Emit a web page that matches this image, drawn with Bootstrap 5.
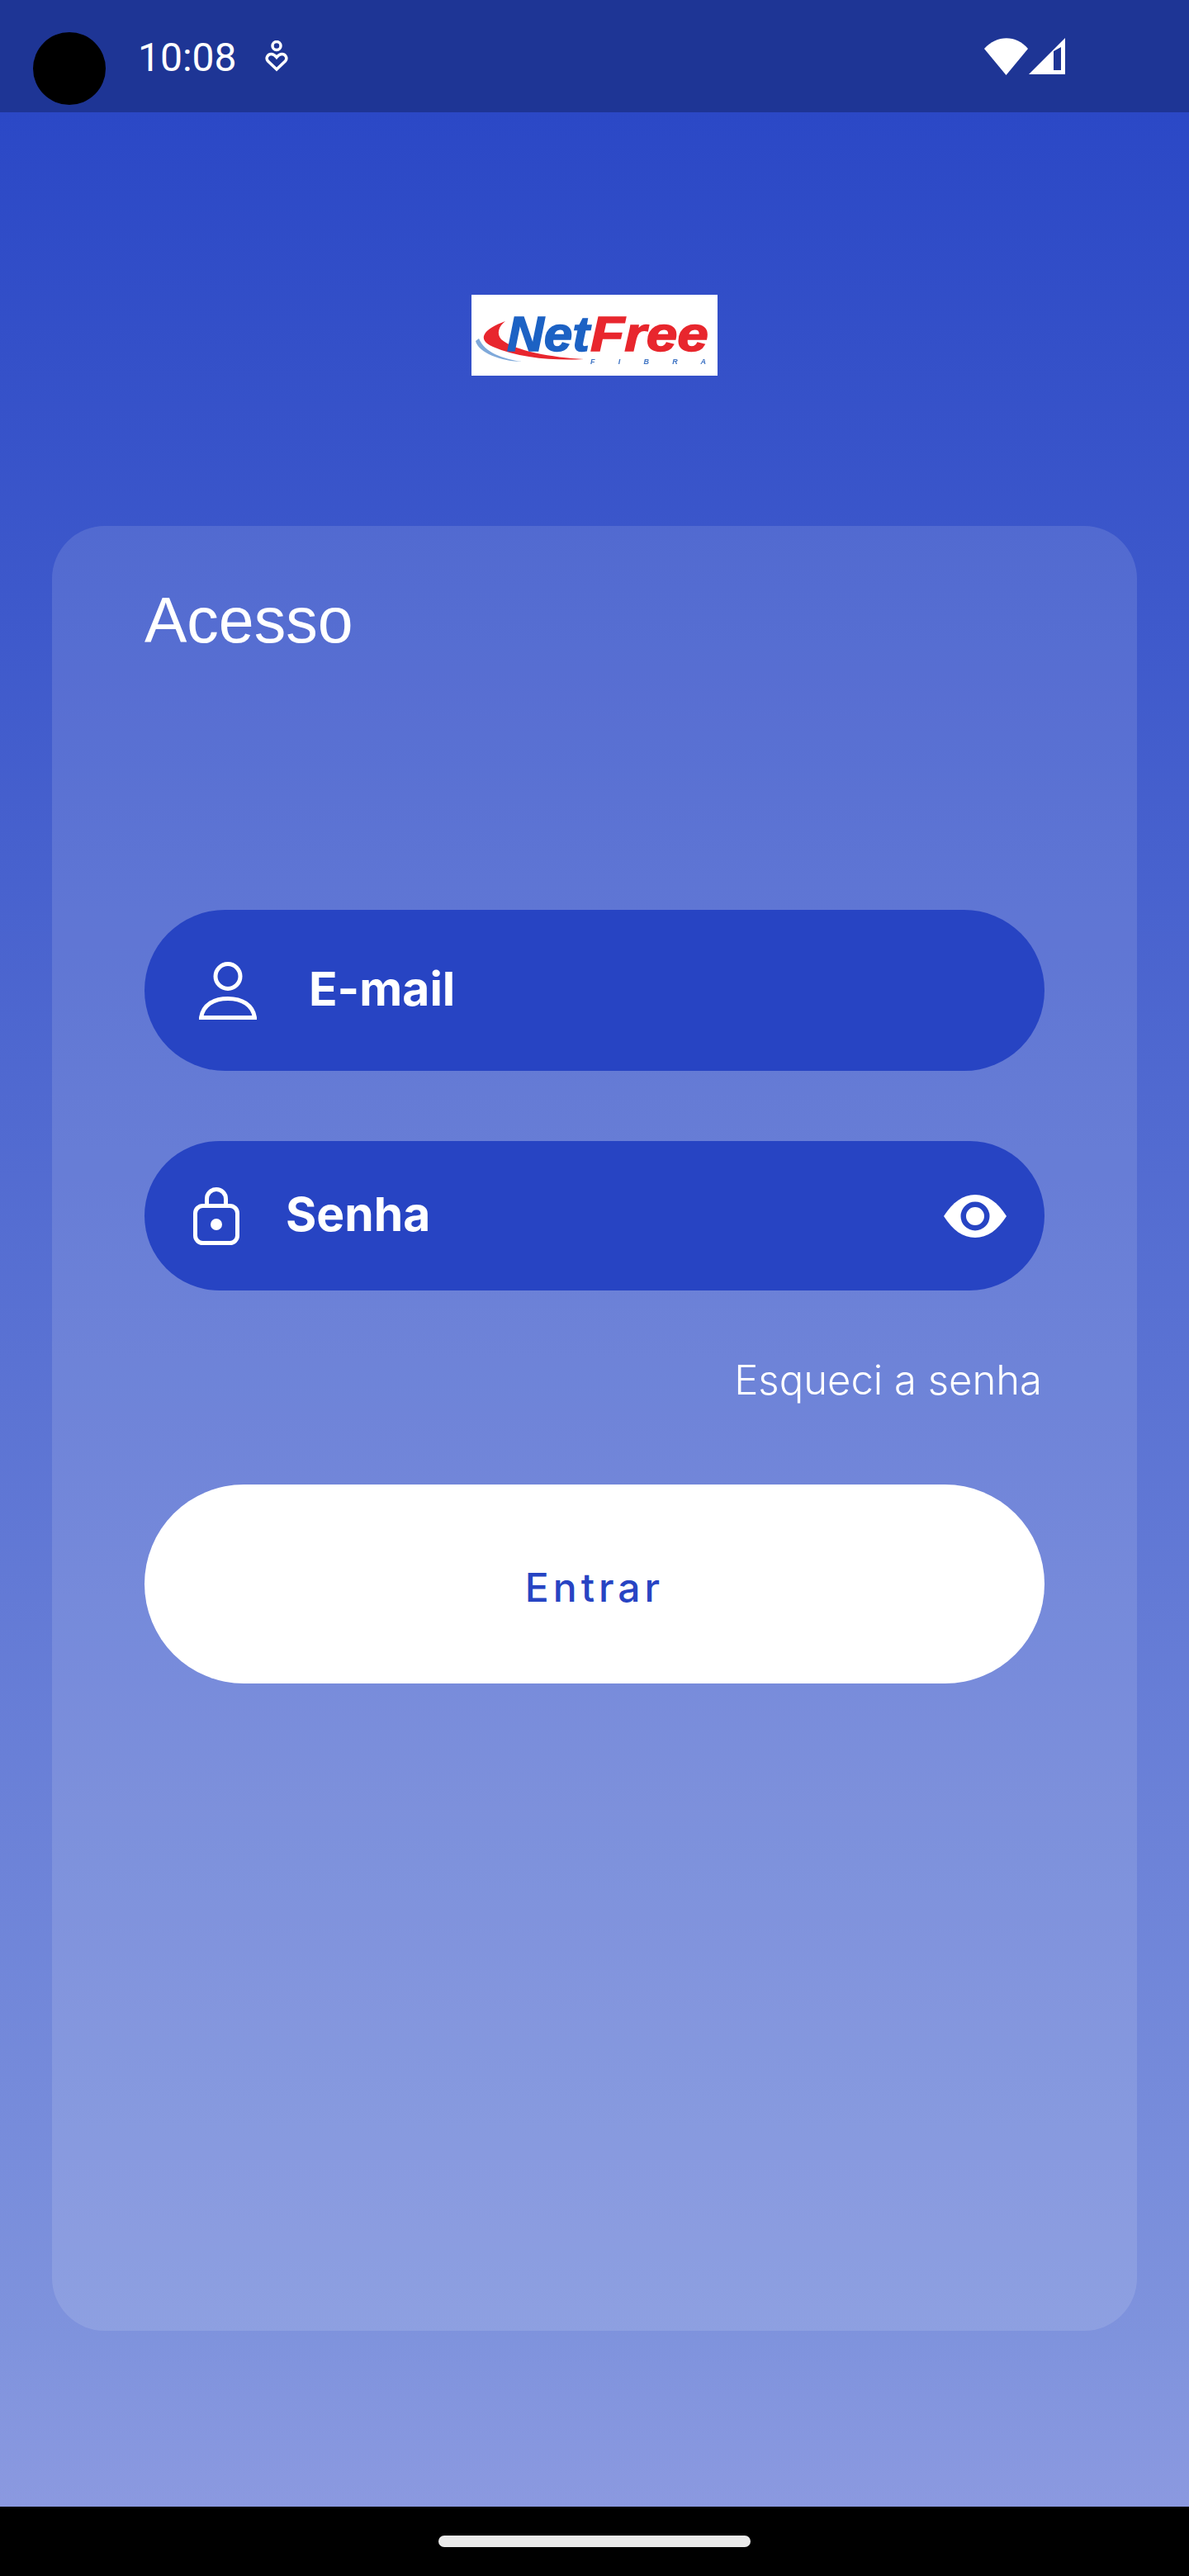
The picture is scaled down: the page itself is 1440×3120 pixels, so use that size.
<!DOCTYPE html>
<html lang="pt-BR">
<head>
  <meta charset="UTF-8">
  <meta name="viewport" content="width=device-width, initial-scale=1">
  <title>Acesso</title>
  <link href="https://cdn.jsdelivr.net/npm/bootstrap@5.3.3/dist/css/bootstrap.min.css" rel="stylesheet">
  <style>
    html, body { height: 100%; }
    body { font-family: Inter, "Liberation Sans", sans-serif; background: #000; overflow: hidden; }
    .app-screen { height: 3120px; }
    .status-strip { height: 136px; background: #1e3595; padding: 0 150px 0 40px; font-family: Roboto, sans-serif; }
    .cam-dot { width: 88px; height: 88px; margin-top: 30px; background: #000; }
    .clock-text { font-size: 48px; line-height: 1; margin-left: 39px; margin-top: 3px; }
    .status-glyph { margin-left: 34px; margin-top: -1px; }
    .gradient-area { height: 2900px; background: linear-gradient(180deg, #2b48c6 0%, #7f93dd 93%, #8b99e0 100%); padding: 221px 63px 0; }
    .brand-box { width: 298px; height: 98px; background: #fff; }
    .login-panel { height: 2186px; margin-top: 182px; padding: 72px 112px 0; border-radius: 64px; background: rgba(255,255,255,.12); }
    .panel-title { font-family: "Liberation Sans", Arial, sans-serif; font-size: 77px; font-weight: 400; line-height: 84px; margin-bottom: 309px; }
    .pill-field { border-radius: 100px; background: #2744c3; }
    .pill-email { height: 195px; padding-left: 66px; gap: 63px; margin-bottom: 85px; }
    .pill-pass { height: 181px; padding-left: 59px; padding-right: 46px; gap: 56px; }
    .pill-label { font-size: 57px; font-weight: 700; line-height: 1; margin-top: -5px; }
    .forgot-row { font-size: 49px; font-weight: 300; line-height: 56px; margin: 81px 3px 0 0; }
    .enter-btn { height: 241px; margin-top: 98px; padding-top: 14px; border-radius: 121px; font-size: 48px; font-weight: 500; letter-spacing: 5px; color: #2744c3; background: #fff; border: 0; }
    .nav-strip { height: 84px; background: #000; }
    .home-pill { width: 378px; height: 14px; margin-top: 35px; background: #eaeaea; }
  </style>
</head>
<body>
  <div class="app-screen d-flex flex-column">
    <div class="status-strip d-flex align-items-center text-white">
      <span class="cam-dot rounded-circle"></span>
      <span class="clock-text">10:08</span>
      <svg class="status-glyph" width="28" height="38" viewBox="0 0 28 38" fill="none" stroke="#fff" stroke-width="3.5">
        <circle cx="14" cy="6.5" r="5"/>
        <path d="M14 35 L3.5 25 C.5 21.5 3 16.5 7.5 16.5 C10 16.5 12 18 14 20.5 C16 18 18 16.5 20.5 16.5 C25 16.5 27.5 21.5 24.5 25Z"/>
      </svg>
      <span class="flex-grow-1"></span>
      <svg width="54" height="45" viewBox="0 0 54 45" fill="#fff"><path d="M0 13 C15 -4 39 -4 53 13 L26.500 45Z"/></svg>
      <svg class="status-bars" width="44" height="44" viewBox="0 0 44 44"><path fill="#fff" fill-rule="evenodd" d="M0 44 L44 0 V44Z M30 16 L39 11 V39 H30Z"/></svg>
    </div>

    <div class="gradient-area">
      <div class="d-flex justify-content-center">
        <div class="brand-box">
          <svg width="298" height="98" viewBox="0 0 298 98">
            <defs><filter id="soft"><feGaussianBlur stdDeviation="0.7"/></filter></defs>
            <g filter="url(#soft)">
              <path d="M41 32 C14 42 6 54 26 63 C58 77 102 80 136 78 C98 76 52 68 36 54 C30 47 33 38 41 32Z" fill="#e8262d"/>
              <path d="M5 56 C8 70 36 81 62 81 C38 78 16 70 9 53Z" fill="#7fa9da"/>
              <text x="43" y="68" font-family="Liberation Sans, sans-serif" font-size="60" font-style="italic" font-weight="700" fill="#1d62c4" stroke="#1d62c4" stroke-width="1.5" textLength="100" lengthAdjust="spacingAndGlyphs">Net</text>
              <text x="144" y="68" font-family="Liberation Sans, sans-serif" font-size="60" font-style="italic" font-weight="700" fill="#e8262d" stroke="#e8262d" stroke-width="1.5" textLength="143" lengthAdjust="spacingAndGlyphs">Free</text>
              <text x="144" y="84" font-family="Liberation Sans, sans-serif" font-size="9" font-style="italic" font-weight="700" fill="#3f74c4" textLength="140">F I B R A</text>
            </g>
          </svg>
        </div>
      </div>

      <div class="login-panel text-white">
        <h1 class="panel-title">Acesso</h1>
        <div class="pill-field pill-email d-flex align-items-center">
          <svg width="70" height="70" viewBox="0 0 70 70" fill="none" stroke="#fff" stroke-width="5">
            <circle cx="35" cy="17.500" r="15"/>
            <path d="M2.500 67.500 C5 52 18 44.500 35 44.500 C52 44.500 65 52 67.500 67.500Z"/>
          </svg>
          <span class="pill-label">E-mail</span>
        </div>
        <div class="pill-field pill-pass d-flex align-items-center">
          <svg width="56" height="70" viewBox="0 0 56 70" fill="none" stroke="#fff" stroke-width="5">
            <rect x="2.500" y="22.500" width="51" height="45" rx="9"/>
            <path d="M16.500 22 V14 a11.500 11.500 0 0 1 23 0 V22"/>
            <circle cx="28" cy="45" r="7" fill="#fff" stroke="none"/>
          </svg>
          <span class="pill-label flex-grow-1">Senha</span>
          <svg width="76" height="52" viewBox="0 0 76 52">
            <path fill="#fff" d="M0 26 C11 9 23 0 38 0 C53 0 65 9 76 26 C65 43 53 52 38 52 C23 52 11 43 0 26Z"/>
            <circle cx="38" cy="26" r="14.250" fill="#fff" stroke="#2744c3" stroke-width="6.500"/>
          </svg>
        </div>
        <div class="forgot-row text-end">Esqueci a senha</div>
        <button type="button" class="btn enter-btn w-100">Entrar</button>
      </div>
    </div>

    <div class="nav-strip d-flex justify-content-center">
      <span class="home-pill rounded-pill"></span>
    </div>
  </div>
  <script src="https://cdn.jsdelivr.net/npm/bootstrap@5.3.3/dist/js/bootstrap.bundle.min.js"></script>
</body>
</html>
